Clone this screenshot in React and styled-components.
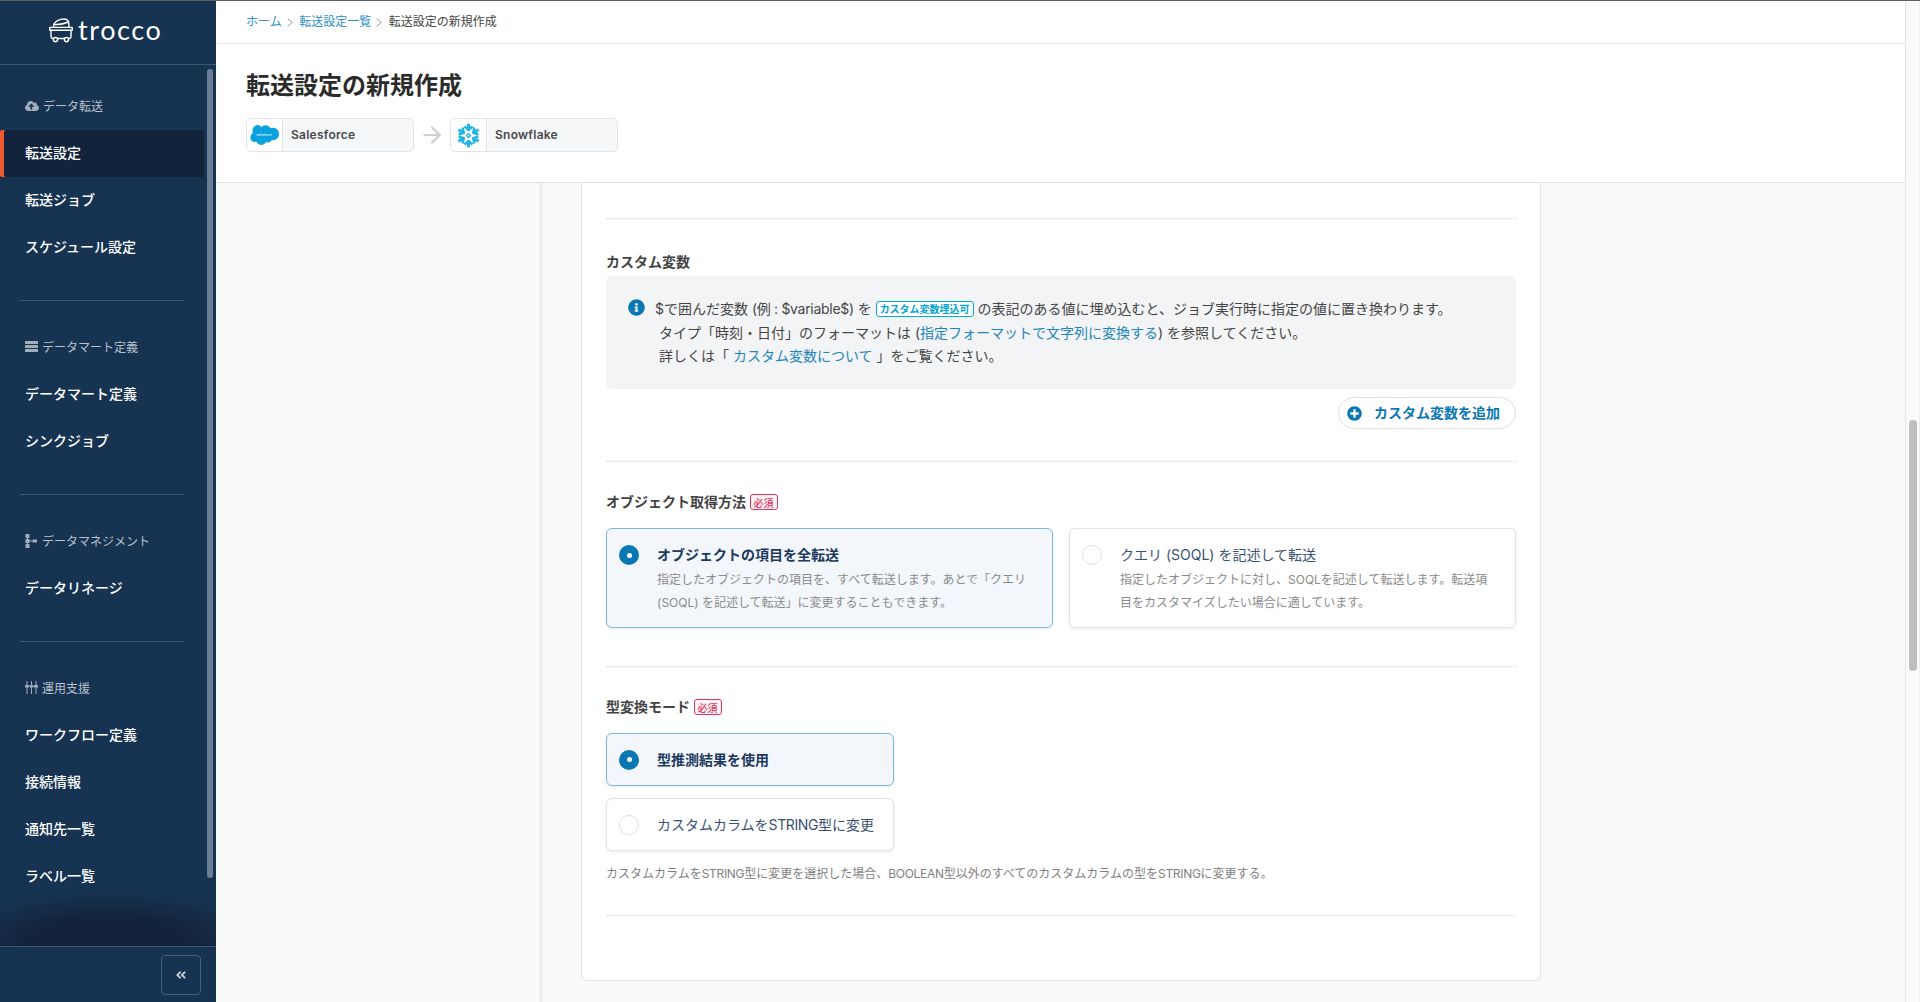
import React from "react";
import styled, { createGlobalStyle } from "styled-components";
import { FaCloudUploadAlt, FaInfoCircle, FaPlusCircle, FaAngleDoubleLeft } from "react-icons/fa";
import { ArrowRight } from "lucide-react";

const Global = createGlobalStyle`
  html, body { margin: 0; padding: 0; height: 100%; overflow: hidden; }
  body { font-family: Inter, "Noto Sans CJK JP", "Liberation Sans", sans-serif; color: #444; }
  * { box-sizing: border-box; }
`;

const Page = styled.div`
  display: flex; height: 1002px; border-top: 1px solid #5c5f63; background: #fff;
`;
const Sidebar = styled.aside`
  width: 216px; flex: none; display: flex; flex-direction: column; background: #173352; color: #fff;
`;
const Brand = styled.div`
  height: 64px; flex: none; display: flex; align-items: center; padding: 0 0 6px 49px; gap: 5px;
  border-bottom: 1px solid #3d5670;
`;
const BrandName = styled.span`
  font-family: Lato, sans-serif; font-size: 27px; letter-spacing: 1.6px; color: #fff; line-height: 1;
`;
const NavArea = styled.div`
  flex: 1; position: relative; overflow: hidden; padding-top: 18px;
`;
const NavThumb = styled.div`
  position: absolute; left: 207px; top: 4px; width: 6px; height: 809px; border-radius: 3px; background: #6a7f97;
`;
const NavFade = styled.div`
  position: absolute; left: 0; right: 0; bottom: 0; height: 56px; pointer-events: none;
  background: radial-gradient(ellipse 74% 100% at 50% 100%, #12233b 50%, rgba(18,35,59,0) 100%);
`;
const NavGroup = styled.section`
  width: 204px; padding-bottom: 29px;
`;
const NavRule = styled.div`
  width: 164px; margin: 0 0 23px 20px; height: 1px; background: #3d5670;
`;
const GroupLabel = styled.div`
  height: 47px; display: flex; align-items: center; gap: 4px; padding: 0 0 2px 25px;
  font-size: 12px; color: #b7c0cb;
  svg { flex: none; color: #a3aebb; }
`;
const NavItem = styled.a`
  display: flex; align-items: center; height: 47px; padding: 0 0 3px 25px;
  font-size: 14px; font-weight: 500; color: #fff;
  background: ${p => (p.$active ? "#12233c" : "transparent")};
  box-shadow: ${p => (p.$active ? "inset 4px 0 0 #ee5a2f" : "none")};
  border-radius: ${p => (p.$active ? "2px 0 0 2px" : "0")};
`;
const SideFoot = styled.div`
  height: 56px; flex: none; border-top: 1px solid #3d5670; display: flex; justify-content: flex-end;
  padding: 8px 15px 0 0;
`;
const CollapseBtn = styled.button`
  width: 40px; height: 40px; border: 1px solid #475f79; border-radius: 4px; background: transparent;
  color: #c6ced7; display: flex; align-items: center; justify-content: center; padding: 0;
`;

const Main = styled.main`
  flex: 1; min-width: 0; display: flex; flex-direction: column;
`;
const Crumbs = styled.nav`
  height: 43px; flex: none; display: flex; align-items: center; padding: 0 0 4px 30px;
  border-bottom: 1px solid #e4e5e7; font-size: 12px; color: #444; gap: 5px;
`;
const CrumbLink = styled.a`
  color: #2c8fc6;
`;
const CrumbSep = styled.svg`
  width: 6px; height: 9px; margin: 4px 1.5px 0 0; flex: none; color: #8f959c;
`;
const TitleBlock = styled.header`
  height: 139px; flex: none; padding: 25px 0 0 30px; border-bottom: 1px solid #e1e3e5;
`;
const Title = styled.h1`
  margin: 0; font-size: 24px; line-height: 32px; font-weight: 700; color: #2b2b2b; padding-top: 1px; height: 32px;
`;
const Route = styled.div`
  margin-top: 17px; display: flex; align-items: center;
`;
const Chip = styled.div`
  width: 168px; height: 34px; display: flex; border: 1px solid #e2e4e8; border-radius: 5px; overflow: hidden; background: #f6f7f9;
`;
const ChipLogo = styled.div`
  width: 36px; flex: none; background: #fff; border-right: 1px solid #e2e4e8; padding-right: 1px;
  display: flex; align-items: center; justify-content: center;
`;
const ChipName = styled.div`
  display: flex; align-items: center; padding: 0 0 2px 8px; font-size: 12px; font-weight: 600; letter-spacing: .25px; color: #48494d;
`;
const RouteArrow = styled.div`
  width: 36px; display: flex; justify-content: center; color: #cdcecf;
`;
const Body = styled.div`
  flex: 1; min-height: 0; overflow: hidden; background-color: #f9fafa;
  background-image: linear-gradient(#eff0f1, #eff0f1);
  background-size: 4px 100%; background-position: 323px 0; background-repeat: no-repeat;
`;
const Card = styled.div`
  width: 960px; height: 798px; margin-left: 365px; padding: 0 24px; background: #fff;
  border: 1px solid #e2e3e5; border-top: 0; border-radius: 0 0 6px 6px;
`;
const Section = styled.section`
  padding-top: ${p => p.$top}px; padding-bottom: ${p => p.$bottom}px; border-bottom: 1px dotted #d6d7d9;
`;
const FieldLabel = styled.div`
  display: flex; align-items: center; gap: 3.5px; height: 20px; font-size: 14px; font-weight: 700; color: #444;
`;
const LabelText = styled.span`
  padding-bottom: 2px;
`;
const Required = styled.span`
  display: inline-flex; align-items: center; justify-content: center; width: 28px; height: 16px;
  border: 1px solid #e0335f; border-radius: 3px; background: #fff5f7; color: #e0335f; font-size: 10px; font-weight: 500;
`;
const InfoBox = styled.div`
  margin-top: 4px; height: 113px; padding: 21px 0 0 22px; background: #f3f4f6; border-radius: 6px;
  display: flex; gap: 10px; font-size: 14px; color: #454545;
  & > svg { flex: none; color: #0a77b5; margin-top: 2px; }
`;
const InfoText = styled.div`
  min-width: 0;
`;
const InfoLine = styled.div`
  height: 23.5px; line-height: 23.5px; padding-left: ${p => (p.$indent ? 4 : 0)}px; white-space: nowrap;
`;
const TextLink = styled.a`
  color: #1f85bd;
`;
const TightLatin = styled.span`
  letter-spacing: ${p => p.$by || -0.3}px;
`;
const EmbedTag = styled.span`
  display: inline-block; height: 16px; line-height: 14px; padding: 0 3px; vertical-align: 1px;
  border: 1px solid #00aed6; border-radius: 3px; background: #fff; color: #00a5cf; font-size: 10px; font-weight: 700;
`;
const ButtonRow = styled.div`
  margin-top: 8px; display: flex; justify-content: flex-end;
`;
const AddButton = styled.button`
  height: 32px; display: flex; align-items: center; gap: 12px; padding: 0 15px 0 8px;
  border: 1px solid #dfe1e5; border-radius: 16px; background: #fff; color: #0a77b5;
  font: 700 14px Inter, "Noto Sans CJK JP", sans-serif;
`;
const AddLabel = styled.span`
  padding-bottom: 2px;
`;
const ChoiceGrid = styled.div`
  margin-top: 16px; display: grid; grid-template-columns: 1fr 1fr; gap: 16px;
`;
const ChoiceStack = styled.div`
  margin-top: 16px; width: 288px; display: flex; flex-direction: column; gap: 12px;
`;
const Choice = styled.div`
  display: flex; gap: 18px; align-items: ${p => (p.$compact ? "center" : "flex-start")};
  height: ${p => (p.$compact ? 53 : 100)}px; padding: ${p => (p.$compact ? "0 12px" : "16px 20px 0 12px")};
  border: 1px solid ${p => (p.$selected ? "#7db7de" : "#e2e3e5")}; border-radius: 6px;
  background: ${p => (p.$selected ? "#f3f7fb" : "#fff")};
  box-shadow: 0 1px 3px rgba(30, 50, 80, .1);
`;
const Radio = styled.span`
  flex: none; width: 20px; height: 20px; border-radius: 50%; display: flex; align-items: center; justify-content: center;
  border: ${p => (p.$on ? "0" : "1px solid #dedfe1")}; background: ${p => (p.$on ? "#0a77b5" : "#fff")};
  &::after { content: ""; width: 5px; height: 5px; border-radius: 50%; background: ${p => (p.$on ? "#fff" : "transparent")}; }
`;
const ChoiceTitle = styled.div`
  font-size: 14px; line-height: 20px; font-weight: ${p => (p.$on ? 700 : 400)}; color: ${p => (p.$on ? "#1d3a5e" : "#3a5172")};
  white-space: nowrap;
`;
const ChoiceDesc = styled.div`
  margin-top: 3px; font-size: 12px; line-height: 23px; color: #8a8a8a;
`;
const Help = styled.div`
  margin-top: 13px; margin-bottom: -1px; font-size: 12px; line-height: 20px; color: #7f7f7f;
`;
const ScrollTrack = styled.div`
  width: 15px; flex: none; background: #fafafa; border-left: 1px solid #e4e4e4; border-right: 1px solid #f0f0f0; padding-left: 3px;
`;
const ScrollThumb = styled.div`
  margin-top: 419px; width: 8px; height: 251px; border-radius: 4px; background: #bfbfbf;
`;

const TroccoMark = () => (
  <svg width="24" height="26" viewBox="0 0 24 26" fill="none" stroke="#fff" strokeWidth="1.4" strokeLinecap="round" strokeLinejoin="round">
    <path d="M4.600 10C4.200 6 7.200 3.600 12 2.400c4.500-1.100 7.400.3 7.700 3.100L20 10" />
    <path d="M5 7.200c4.200.8 10-.5 14.700-2.200" />
    <path d="M.8 10.400h22.400v2.800H.8z" />
    <path d="M2 13.200v6.600c0 1 .8 1.700 1.700 1.700h16.600c1 0 1.700-.7 1.700-1.700v-6.600" />
    <circle cx="6.500" cy="22.600" r="2.100" fill="#173352" />
    <circle cx="17.500" cy="22.600" r="2.100" fill="#173352" />
  </svg>
);
const MartIcon = () => (
  <svg width="13" height="11" viewBox="0 0 13 11" fill="currentColor">
    <rect y="0" width="13" height="3" rx=".6" />
    <rect y="4" width="13" height="3" rx=".6" />
    <rect y="8" width="13" height="3" rx=".6" />
  </svg>
);
const ManageIcon = () => (
  <svg width="13" height="14" viewBox="0 0 13 14" fill="currentColor">
    <rect x="0.500" y="0" width="4" height="4" rx=".6" />
    <rect x="0.500" y="5" width="4" height="4" rx=".6" />
    <rect x="0.500" y="10" width="4" height="4" rx=".6" />
    <rect x="7.500" y="5.500" width="4.500" height="3" rx=".6" />
    <path d="M2 3h1v8H2zM4 6.500h4v1H4z" />
  </svg>
);
const OpsIcon = () => (
  <svg width="13" height="13" viewBox="0 0 13 13" fill="currentColor">
    <path d="M1.500 0h1v13h-1zM6 0h1v13H6zM10.500 0h1v13h-1z" />
    <rect x="0" y="4" width="4" height="2.600" rx=".6" />
    <rect x="4.500" y="4" width="4" height="2.600" rx=".6" />
    <rect x="9" y="4" width="4" height="2.600" rx=".6" />
  </svg>
);
const SalesforceLogo = () => (
  <svg width="30" height="22" viewBox="0 0 30 22">
    <path fill="#08a3de" d="M12.300 3.300C13.300 2 14.800 1.200 16.500 1.200c2.200 0 4.100 1.300 5 3.100.8-.3 1.600-.5 2.500-.5 3.300 0 6 2.800 6 6.200s-2.700 6.200-6 6.200c-.4 0-.8 0-1.200-.1-.8 1.400-2.200 2.300-3.900 2.300-.7 0-1.400-.2-2-.5-.8 1.800-2.600 3.100-4.600 3.100-2.200 0-4-1.400-4.700-3.300-.3.1-.6.1-.9.1C3.700 18.600 1.400 16.200 1.400 13.400c0-1.900 1-3.500 2.500-4.400C3.600 8.300 3.400 7.500 3.400 6.700c0-3.200 2.600-5.700 5.700-5.700 1.300 0 2.300.9 3.200 2.300z" />
    <text x="15" y="11.500" textAnchor="middle" fontSize="3.200" fill="#fff" fontFamily="Inter, sans-serif">salesforce</text>
  </svg>
);
const SnowArm = ({ angle }) => (
  <g transform={`rotate(${angle} 12 12)`}>
    <path d="M12 1.600V8" strokeWidth="2.600" />
    <path d="M8.400 4 12 6.800 15.600 4" strokeWidth="2.300" />
  </g>
);
const SnowflakeLogo = () => (
  <svg width="27" height="27" viewBox="0 0 24 24" fill="none" stroke="#1fb5e6" strokeLinecap="butt" strokeLinejoin="miter">
    {[0, 60, 120, 180, 240, 300].map(a => <SnowArm key={a} angle={a} />)}
    <path d="M12 10.200 13.800 12 12 13.800 10.200 12z" strokeWidth="1.100" />
  </svg>
);
const Sep = () => (
  <CrumbSep viewBox="0 0 6 9" fill="none" stroke="currentColor" strokeWidth="1">
    <path d="M.7.6 5.300 4.500.7 8.400" />
  </CrumbSep>
);

export default function App() {
  return (
    <>
      <Global />
      <Page>
        <Sidebar>
          <Brand>
            <TroccoMark />
            <BrandName>trocco</BrandName>
          </Brand>
          <NavArea>
            <NavGroup>
              <GroupLabel><FaCloudUploadAlt size={14} />データ転送</GroupLabel>
              <NavItem $active>転送設定</NavItem>
              <NavItem>転送ジョブ</NavItem>
              <NavItem>スケジュール設定</NavItem>
            </NavGroup>
            <NavRule />
            <NavGroup>
              <GroupLabel><MartIcon />データマート定義</GroupLabel>
              <NavItem>データマート定義</NavItem>
              <NavItem>シンクジョブ</NavItem>
            </NavGroup>
            <NavRule />
            <NavGroup>
              <GroupLabel><ManageIcon />データマネジメント</GroupLabel>
              <NavItem>データリネージ</NavItem>
            </NavGroup>
            <NavRule />
            <NavGroup>
              <GroupLabel><OpsIcon />運用支援</GroupLabel>
              <NavItem>ワークフロー定義</NavItem>
              <NavItem>接続情報</NavItem>
              <NavItem>通知先一覧</NavItem>
              <NavItem>ラベル一覧</NavItem>
            </NavGroup>
            <NavFade />
            <NavThumb />
          </NavArea>
          <SideFoot>
            <CollapseBtn aria-label="collapse"><FaAngleDoubleLeft size={12} /></CollapseBtn>
          </SideFoot>
        </Sidebar>
        <Main>
          <Crumbs>
            <CrumbLink>ホーム</CrumbLink>
            <Sep />
            <CrumbLink>転送設定一覧</CrumbLink>
            <Sep />
            <span>転送設定の新規作成</span>
          </Crumbs>
          <TitleBlock>
            <Title>転送設定の新規作成</Title>
            <Route>
              <Chip>
                <ChipLogo><SalesforceLogo /></ChipLogo>
                <ChipName>Salesforce</ChipName>
              </Chip>
              <RouteArrow><ArrowRight size={26} strokeWidth={2} /></RouteArrow>
              <Chip>
                <ChipLogo><SnowflakeLogo /></ChipLogo>
                <ChipName>Snowflake</ChipName>
              </Chip>
            </Route>
          </TitleBlock>
          <Body>
            <Card>
              <Section $top={35} $bottom={0} />
              <Section $top={33} $bottom={32}>
                <FieldLabel><LabelText>カスタム変数</LabelText></FieldLabel>
                <InfoBox>
                  <FaInfoCircle size={17} />
                  <InfoText>
                    <InfoLine>$で囲んだ変数 <TightLatin>(例 : $variable$)</TightLatin> を <EmbedTag>カスタム変数埋込可</EmbedTag> の表記のある値に埋め込むと、ジョブ実行時に指定の値に置き換わります。</InfoLine>
                    <InfoLine $indent>タイプ「時刻・日付」のフォーマットは (<TextLink>指定フォーマットで文字列に変換する</TextLink>) を参照してください。</InfoLine>
                    <InfoLine $indent>詳しくは「 <TextLink>カスタム変数について</TextLink> 」をご覧ください。</InfoLine>
                  </InfoText>
                </InfoBox>
                <ButtonRow>
                  <AddButton><FaPlusCircle size={15} /><AddLabel>カスタム変数を追加</AddLabel></AddButton>
                </ButtonRow>
              </Section>
              <Section $top={30} $bottom={38}>
                <FieldLabel><LabelText>オブジェクト取得方法</LabelText><Required>必須</Required></FieldLabel>
                <ChoiceGrid>
                  <Choice $selected>
                    <Radio $on />
                    <div>
                      <ChoiceTitle $on>オブジェクトの項目を全転送</ChoiceTitle>
                      <ChoiceDesc>指定したオブジェクトの項目を、すべて転送します。あとで「クエリ (SOQL) を記述して転送」に変更することもできます。</ChoiceDesc>
                    </div>
                  </Choice>
                  <Choice>
                    <Radio />
                    <div>
                      <ChoiceTitle>クエリ (SOQL) を記述して転送</ChoiceTitle>
                      <ChoiceDesc>指定したオブジェクトに対し、SOQLを記述して転送します。転送項目をカスタマイズしたい場合に適しています。</ChoiceDesc>
                    </div>
                  </Choice>
                </ChoiceGrid>
              </Section>
              <Section $top={30} $bottom={32}>
                <FieldLabel><LabelText>型変換モード</LabelText><Required>必須</Required></FieldLabel>
                <ChoiceStack>
                  <Choice $selected $compact>
                    <Radio $on />
                    <ChoiceTitle $on>型推測結果を使用</ChoiceTitle>
                  </Choice>
                  <Choice $compact>
                    <Radio />
                    <ChoiceTitle>カスタムカラムを<TightLatin $by={-0.4}>STRING</TightLatin>型に変更</ChoiceTitle>
                  </Choice>
                </ChoiceStack>
                <Help>カスタムカラムを<TightLatin>STRING</TightLatin>型に変更を選択した場合、<TightLatin>BOOLEAN</TightLatin>型以外のすべてのカスタムカラムの型を<TightLatin>STRING</TightLatin>に変更する。</Help>
              </Section>
            </Card>
          </Body>
        </Main>
        <ScrollTrack><ScrollThumb /></ScrollTrack>
      </Page>
    </>
  );
}
